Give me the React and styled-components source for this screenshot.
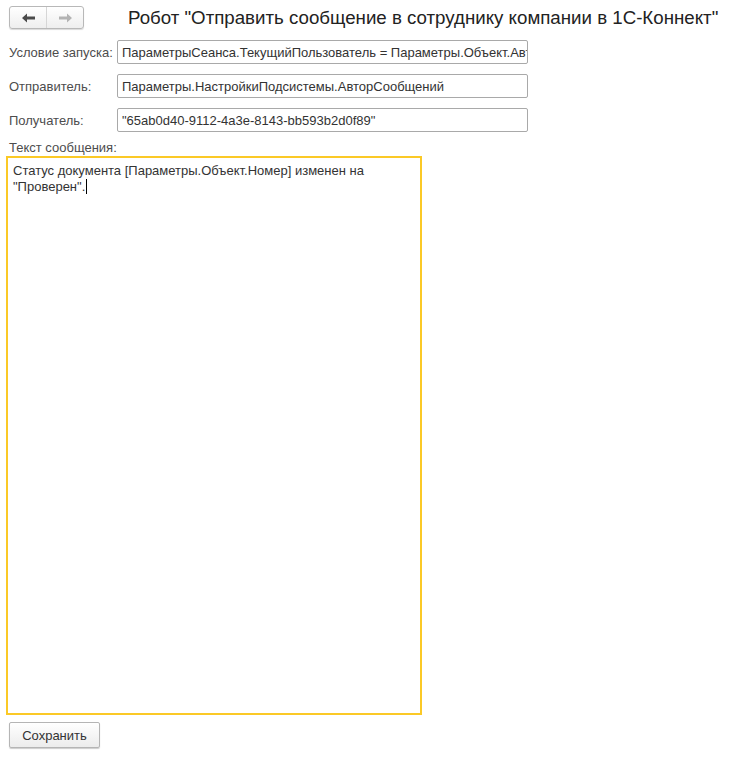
import React from "react";
import styled, { createGlobalStyle } from "styled-components";

const Global = createGlobalStyle`
  html, body { margin: 0; padding: 0; background: #fff; }
  body { font-family: "Liberation Sans", Arial, sans-serif; font-size: 13px; color: #333; }
`;

const Page = styled.div`
  width: 732px;
  height: 759px;
  box-sizing: border-box;
  padding: 6px 0 0 9px;
  display: flex;
  flex-direction: column;
`;

const Header = styled.div`
  display: flex;
  align-items: center;
  height: 23px;
  gap: 44px;
  margin-bottom: 11px;
`;

const NavGroup = styled.div`
  display: flex;
  height: 23px;
  border: 1px solid #b8b8b8;
  border-radius: 3px;
  box-sizing: border-box;
  background: linear-gradient(#ffffff, #eeeeee);
  box-shadow: 0 1px 1px rgba(0,0,0,0.15);
`;

const NavButton = styled.div`
  width: 36px;
  display: flex;
  align-items: center;
  justify-content: center;
  border-left: ${(p) => (p.$divider ? "1px solid #d6d6d6" : "none")};
  color: ${(p) => (p.$disabled ? "#b3b3b3" : "#4a4a4a")};
`;

const Title = styled.h1`
  margin: 0;
  font-family: "Liberation Sans", Arial, sans-serif;
  font-weight: normal;
  font-size: 18.7px;
  color: #222;
  white-space: nowrap;
  line-height: 23px;
`;

const Row = styled.div`
  display: flex;
  align-items: center;
  height: 24px;
  margin-bottom: 10px;
`;

const Label = styled.div`
  width: 108px;
  color: #4d4d4d;
  white-space: nowrap;
`;

const Field = styled.div`
  width: 411px;
  height: 24px;
  box-sizing: border-box;
  border: 1px solid #a9a9a9;
  border-radius: 2px;
  padding: 0 4px;
  display: flex;
  align-items: center;
  overflow: hidden;
  white-space: nowrap;
  color: #333;
  background: #fff;
`;

const AreaLabel = styled.div`
  color: #4d4d4d;
  margin-top: -1px;
  line-height: 14px;
  margin-bottom: 1px;
`;

const TextArea = styled.div`
  margin-left: -3px;
  width: 416px;
  height: 559px;
  box-sizing: border-box;
  border: 2px solid #fbc926;
  padding: 5px 5px;
  line-height: 16px;
  color: #333;
`;

const Caret = styled.span`
  display: inline-block;
  width: 1px;
  height: 15px;
  background: #000;
  vertical-align: -3px;
  margin-left: 1px;
`;

const Footer = styled.div`
  margin-top: 7px;
`;

const Button = styled.div`
  width: 91px;
  height: 26px;
  box-sizing: border-box;
  border: 1px solid #b5b5b5;
  border-radius: 2px;
  background: linear-gradient(#ffffff, #ececec);
  box-shadow: 0 1px 1px rgba(0,0,0,0.2);
  display: flex;
  align-items: center;
  justify-content: center;
  color: #333;
`;

const Arrow = ({ dir }) => (
  <svg width="13" height="10" viewBox="0 0 13 10">
    {dir === "left" ? (
      <path d="M0 5 L5 0.5 V3.5 H13 V6.5 H5 V9.5 Z" fill="currentColor" />
    ) : (
      <path d="M13 5 L8 0.5 V3.5 H0 V6.5 H8 V9.5 Z" fill="currentColor" />
    )}
  </svg>
);

const fields = [
  ["Условие запуска:", "ПараметрыСеанса.ТекущийПользователь = Параметры.Объект.Автор"],
  ["Отправитель:", "Параметры.НастройкиПодсистемы.АвторСообщений"],
  ["Получатель:", "\"65ab0d40-9112-4a3e-8143-bb593b2d0f89\""],
];

export default function App() {
  return (
    <>
      <Global />
      <Page>
        <Header>
          <NavGroup>
            <NavButton><Arrow dir="left" /></NavButton>
            <NavButton $divider $disabled><Arrow dir="right" /></NavButton>
          </NavGroup>
          <Title>Робот "Отправить сообщение в сотруднику компании в 1С-Коннект"</Title>
        </Header>
        {fields.map(([l, v]) => (
          <Row key={l}>
            <Label>{l}</Label>
            <Field>{v}</Field>
          </Row>
        ))}
        <AreaLabel>Текст сообщения:</AreaLabel>
        <TextArea>
          Статус документа [Параметры.Объект.Номер] изменен на "Проверен".<Caret />
        </TextArea>
        <Footer>
          <Button>Сохранить</Button>
        </Footer>
      </Page>
    </>
  );
}
